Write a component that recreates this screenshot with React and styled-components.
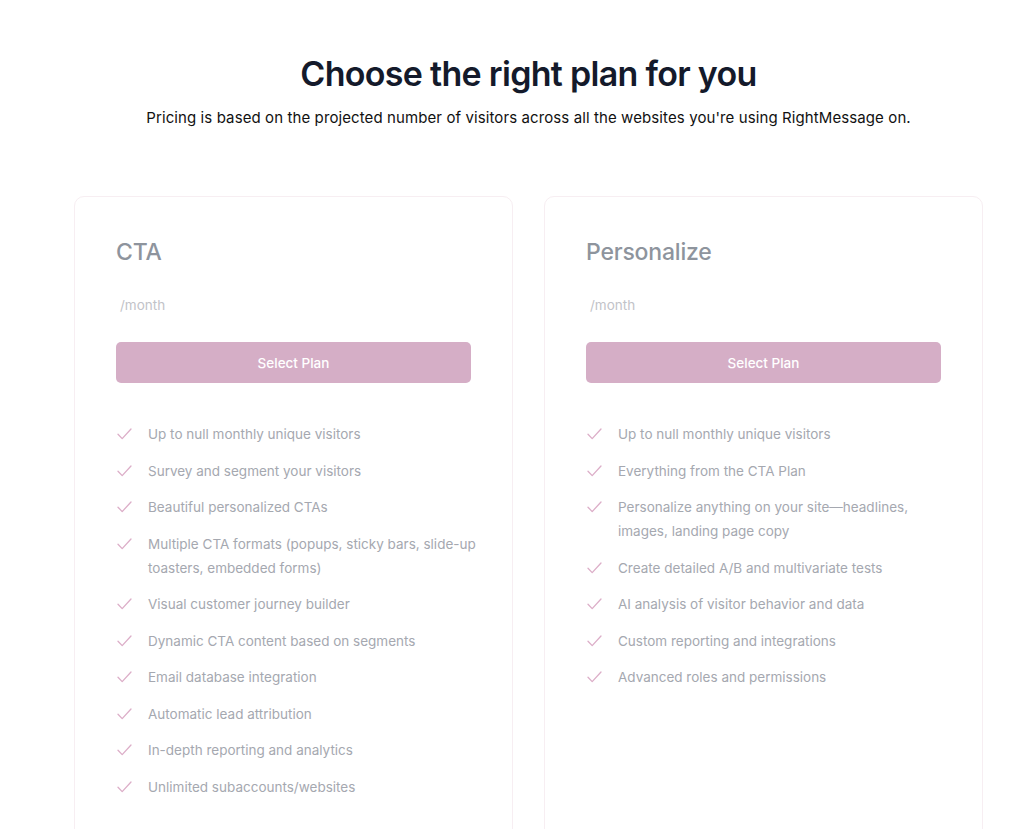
import React from 'react';
import styled, { createGlobalStyle } from 'styled-components';

const GlobalStyle = createGlobalStyle`
  body {
    margin: 0;
    background: #ffffff;
    font-family: Inter, "Noto Sans", sans-serif;
  }
`;

const Page = styled.main`
  padding: 52px 44px 0 74px;
  overflow: hidden;
  height: 829px;
  box-sizing: border-box;
`;

const Header = styled.header`
  text-align: center;
`;

const Title = styled.h1`
  font-size: 34px;
  font-weight: 600;
  letter-spacing: -0.7px;
  color: #141a2b;
  margin: 0;
  line-height: 44px;
`;

const Subtitle = styled.p`
  font-size: 15px;
  color: #111;
  margin: 10px 0 0;
  letter-spacing: 0.1px;
  line-height: 24px;
`;

const Plans = styled.section`
  display: grid;
  grid-template-columns: 439px 439px;
  gap: 31px;
  margin-top: 66px;
`;

const Card = styled.article`
  border: 1px solid #f7eef2;
  border-radius: 10px;
  padding: 40px 41px 60px 41px;
  min-height: 700px;
  background: #fff;
`;

const PlanName = styled.h2`
  font-size: 23px;
  font-weight: 500;
  color: #8e949d;
  margin: 0;
  line-height: 30px;
  letter-spacing: -0.2px;
`;

const Price = styled.div`
  margin-top: 28px;
  padding-left: 4px;
  font-size: 13.5px;
  color: #c2c3c8;
  line-height: 20px;
`;

const SelectButton = styled.button`
  display: block;
  width: 100%;
  height: 41px;
  margin-top: 27px;
  border: none;
  border-radius: 5px;
  background: #d5aec6;
  color: #ffffff;
  font-family: inherit;
  font-size: 13.5px;
  font-weight: 500;
`;

const Features = styled.ul`
  list-style: none;
  margin: 39px -8px 0 0;
  padding: 0;
  display: flex;
  flex-direction: column;
  gap: 12.5px;
`;

const Feature = styled.li`
  display: flex;
  align-items: flex-start;
  gap: 15px;
  font-size: 13.5px;
  line-height: 24px;
  color: #a5a8b0;
`;

const CheckWrap = styled.span`
  flex: none;
  width: 16px;
  height: 24px;
  display: flex;
  align-items: center;
  padding-left: 1px;
`;

const Check = () => (
  <CheckWrap>
    <svg width="15" height="12" viewBox="0 0 15 12" fill="none">
      <path d="M1 6.2 L5.2 10.6 L14 1" stroke="#dcaec8" strokeWidth="1.3" strokeLinecap="round" strokeLinejoin="round" />
    </svg>
  </CheckWrap>
);

const plans = [
  {
    name: 'CTA',
    features: [
      'Up to null monthly unique visitors',
      'Survey and segment your visitors',
      'Beautiful personalized CTAs',
      'Multiple CTA formats (popups, sticky bars, slide-up toasters, embedded forms)',
      'Visual customer journey builder',
      'Dynamic CTA content based on segments',
      'Email database integration',
      'Automatic lead attribution',
      'In-depth reporting and analytics',
      'Unlimited subaccounts/websites',
    ],
  },
  {
    name: 'Personalize',
    features: [
      'Up to null monthly unique visitors',
      'Everything from the CTA Plan',
      'Personalize anything on your site\u2014headlines, images, landing page copy',
      'Create detailed A/B and multivariate tests',
      'AI analysis of visitor behavior and data',
      'Custom reporting and integrations',
      'Advanced roles and permissions',
    ],
  },
];

export default function App() {
  return (
    <>
      <GlobalStyle />
      <Page>
        <Header>
          <Title>Choose the right plan for you</Title>
          <Subtitle>
            Pricing is based on the projected number of visitors across all the websites you're using RightMessage on.
          </Subtitle>
        </Header>
        <Plans>
          {plans.map((plan) => (
            <Card key={plan.name}>
              <PlanName>{plan.name}</PlanName>
              <Price>/month</Price>
              <SelectButton>Select Plan</SelectButton>
              <Features>
                {plan.features.map((f) => (
                  <Feature key={f}>
                    <Check />
                    <span>{f}</span>
                  </Feature>
                ))}
              </Features>
            </Card>
          ))}
        </Plans>
      </Page>
    </>
  );
}
